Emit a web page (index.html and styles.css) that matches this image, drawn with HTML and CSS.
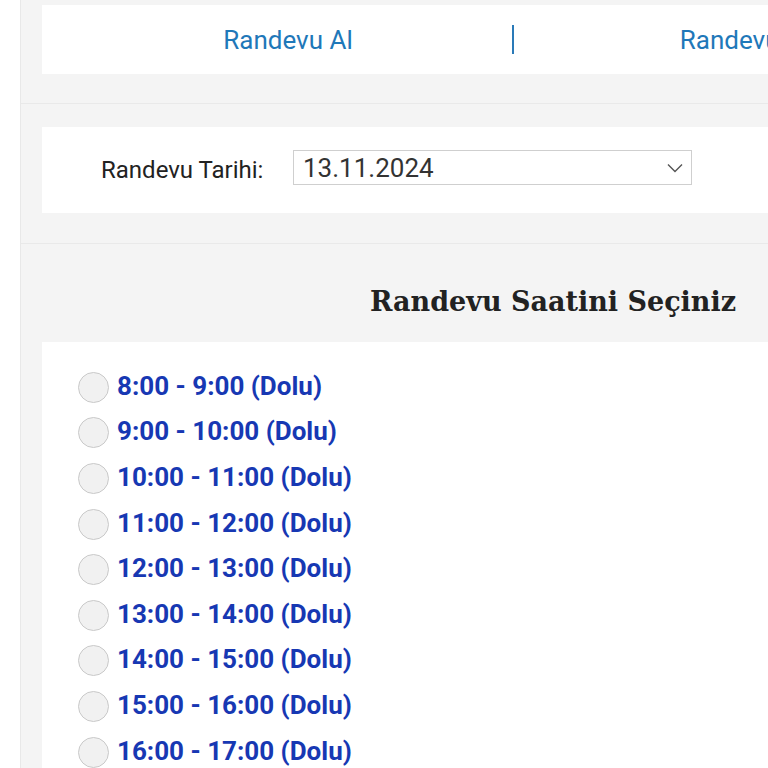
FILE: index.html
```html
<!DOCTYPE html>
<html lang="tr">
<head>
<meta charset="utf-8">
<title>Randevu</title>
<link rel="stylesheet" href="styles.css">
</head>
<body>
<div class="page">
  <div class="band band-top">
    <div class="card tabs">
      <a class="tab">Randevu Al</a>
      <span class="divider"></span>
      <a class="tab">Randevu Sorgula</a>
    </div>
  </div>
  <div class="band band-date">
    <div class="card date-card">
      <label class="date-label">Randevu Tarihi:</label>
      <div class="select">
        <span class="select-value">13.11.2024</span>
        <svg class="chevron" viewBox="0 0 16 10" width="16" height="10"><path d="M1 1.5 L8 8.5 L15 1.5" fill="none" stroke="#555" stroke-width="1.4"/></svg>
      </div>
    </div>
  </div>
  <div class="band band-slots">
    <h2 class="slots-title">Randevu Saatini Seçiniz</h2>
    <div class="card slots">
      <label class="slot"><span class="radio"></span><span class="slot-text">8:00 - 9:00 (Dolu)</span></label>
      <label class="slot"><span class="radio"></span><span class="slot-text">9:00 - 10:00 (Dolu)</span></label>
      <label class="slot"><span class="radio"></span><span class="slot-text">10:00 - 11:00 (Dolu)</span></label>
      <label class="slot"><span class="radio"></span><span class="slot-text">11:00 - 12:00 (Dolu)</span></label>
      <label class="slot"><span class="radio"></span><span class="slot-text">12:00 - 13:00 (Dolu)</span></label>
      <label class="slot"><span class="radio"></span><span class="slot-text">13:00 - 14:00 (Dolu)</span></label>
      <label class="slot"><span class="radio"></span><span class="slot-text">14:00 - 15:00 (Dolu)</span></label>
      <label class="slot"><span class="radio"></span><span class="slot-text">15:00 - 16:00 (Dolu)</span></label>
      <label class="slot"><span class="radio"></span><span class="slot-text">16:00 - 17:00 (Dolu)</span></label>
    </div>
  </div>
</div>
</body>
</html>
```

FILE: styles.css
```css
html, body {
  margin: 0;
  padding: 0;
  background: #ffffff;
  overflow: hidden;
}
body {
  font-family: Roboto, "Liberation Sans", sans-serif;
  width: 768px;
  height: 768px;
}
.page {
  margin-left: 20px;
  width: 1060px;
  min-height: 768px;
  background: #f4f4f4;
  border-left: 1px solid #e8e8e8;
}
.band {
  padding-left: 21px;
}
.band-top {
  padding-top: 5px;
  height: 98px;
  border-bottom: 1px solid #e9e9e9;
}
.band-date {
  padding-top: 23px;
  height: 116px;
  border-bottom: 1px solid #e9e9e9;
}
.card {
  background: #ffffff;
}
.tabs {
  height: 69px;
  display: flex;
  align-items: center;
  padding-left: 22px;
}
.tab {
  width: 448px;
  text-align: center;
  color: #1f78b9;
  font-size: 26px;
}
.divider {
  width: 2px;
  height: 29px;
  background: #2a7ab8;
  margin-right: 39px;
}
.date-card {
  height: 86px;
  display: flex;
  align-items: center;
  padding-left: 59px;
}
.date-label {
  font-size: 24px;
  color: #222;
  width: 192px;
}
.select {
  width: 380px;
  height: 33px;
  border: 1px solid #cfcfcf;
  display: flex;
  align-items: center;
  justify-content: space-between;
  padding: 0 8px 0 9px;
  margin-bottom: 5px;
}
.select-value {
  font-size: 26px;
  color: #333;
}
.chevron {
  display: block;
}
.slots-title {
  margin: 0;
  height: 82px;
  padding-top: 16px;
  display: flex;
  align-items: center;
  padding-left: 328px;
  font-family: "DejaVu Serif", "Liberation Serif", serif;
  font-weight: bold;
  font-size: 27px;
  color: #222;
}
.slots {
  padding: 21px 0 0 36px;
  min-height: 500px;
}
.slot {
  display: flex;
  align-items: center;
  height: 45.6px;
}
.radio {
  width: 29px;
  height: 29px;
  border-radius: 50%;
  border: 1px solid #c9c9c9;
  background: #f1f1f1;
  margin-right: 8px;
  margin-top: 3px;
  flex: none;
}
.slot-text {
  font-weight: bold;
  font-size: 26px;
  color: #1738b3;
}
```
